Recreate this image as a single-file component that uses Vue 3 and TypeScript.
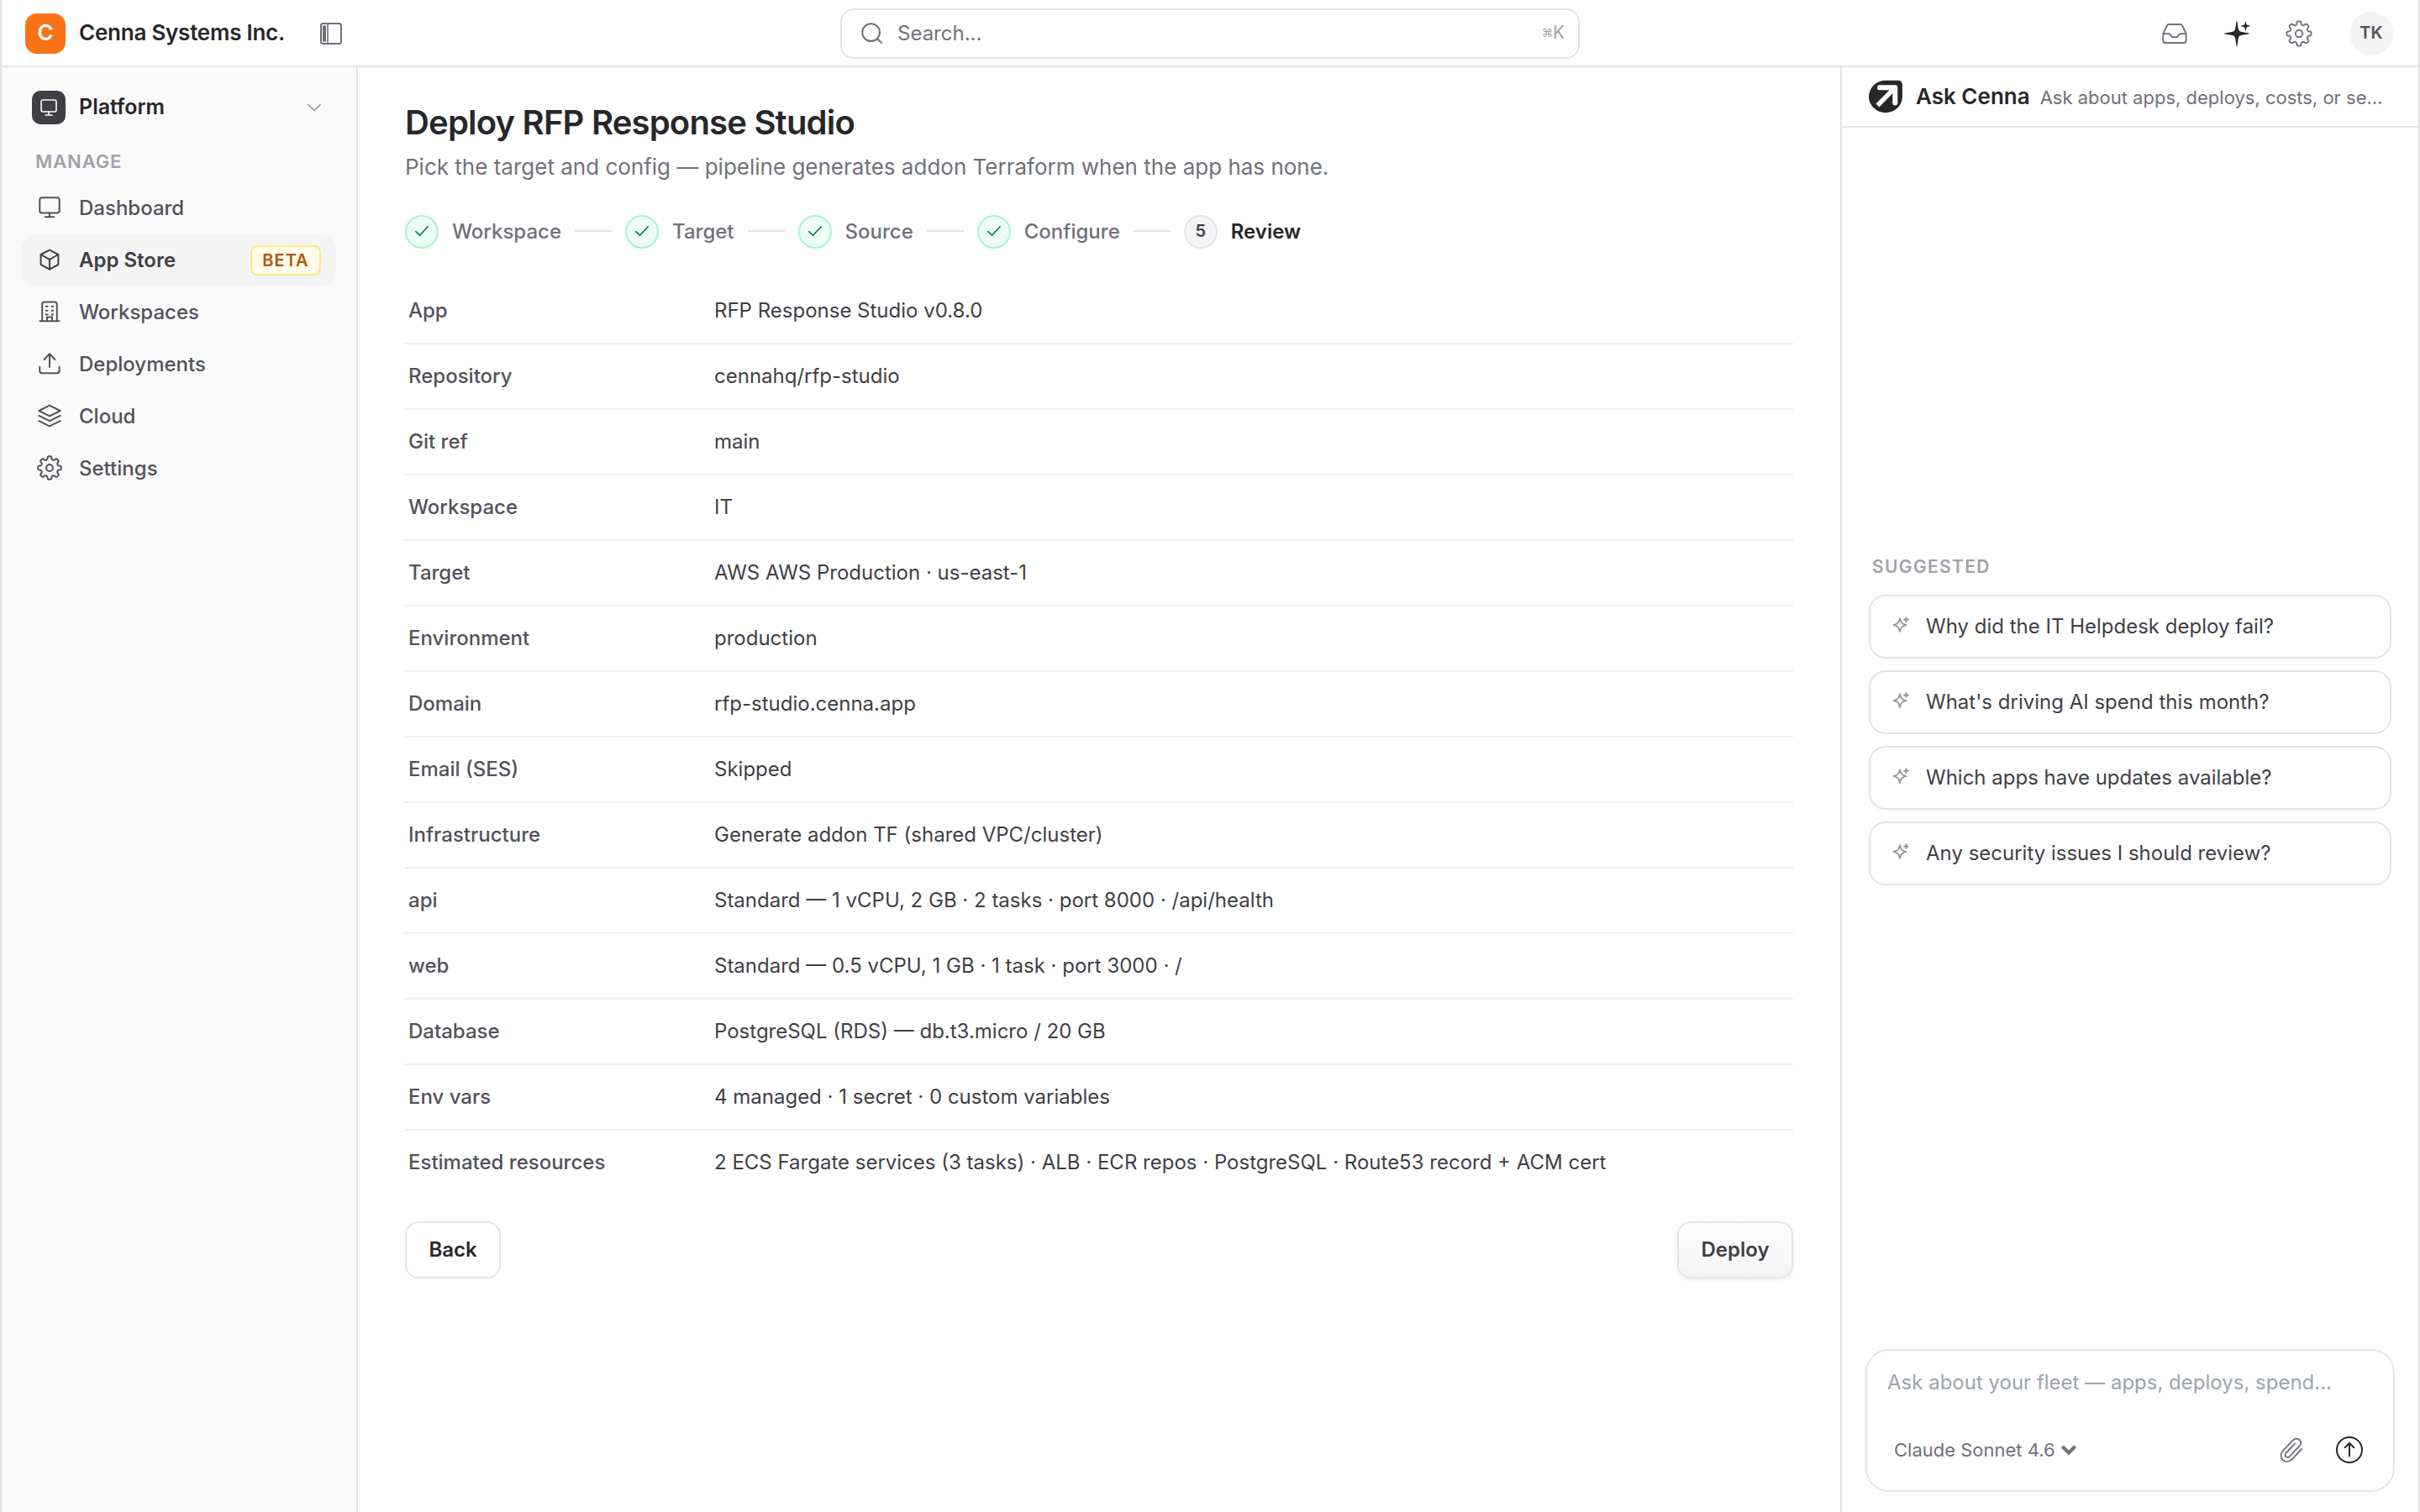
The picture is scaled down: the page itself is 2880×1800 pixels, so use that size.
<script setup lang="ts">
interface NavItem { label: string; icon: string; active?: boolean; badge?: string }
interface Row { label: string; value: string }

const nav: NavItem[] = [
  { label: 'Dashboard', icon: 'monitor' },
  { label: 'App Store', icon: 'cube', active: true, badge: 'BETA' },
  { label: 'Workspaces', icon: 'building' },
  { label: 'Deployments', icon: 'upload' },
  { label: 'Cloud', icon: 'layers' },
  { label: 'Settings', icon: 'gear' },
]

const doneSteps: string[] = ['Workspace', 'Target', 'Source', 'Configure']

const rows: Row[] = [
  { label: 'App', value: 'RFP Response Studio v0.8.0' },
  { label: 'Repository', value: 'cennahq/rfp-studio' },
  { label: 'Git ref', value: 'main' },
  { label: 'Workspace', value: 'IT' },
  { label: 'Target', value: 'AWS AWS Production · us-east-1' },
  { label: 'Environment', value: 'production' },
  { label: 'Domain', value: 'rfp-studio.cenna.app' },
  { label: 'Email (SES)', value: 'Skipped' },
  { label: 'Infrastructure', value: 'Generate addon TF (shared VPC/cluster)' },
  { label: 'api', value: 'Standard — 1 vCPU, 2 GB · 2 tasks · port 8000 · /api/health' },
  { label: 'web', value: 'Standard — 0.5 vCPU, 1 GB · 1 task · port 3000 · /' },
  { label: 'Database', value: 'PostgreSQL (RDS) — db.t3.micro / 20 GB' },
  { label: 'Env vars', value: '4 managed · 1 secret · 0 custom variables' },
  { label: 'Estimated resources', value: '2 ECS Fargate services (3 tasks) · ALB · ECR repos · PostgreSQL · Route53 record + ACM cert' },
]

const suggestions: string[] = [
  'Why did the IT Helpdesk deploy fail?',
  "What's driving AI spend this month?",
  'Which apps have updates available?',
  'Any security issues I should review?',
]

// Eight-lobed cog outline around (cx, cy), alternating between two radii.
function cog(cx: number, cy: number, outer: number, inner: number): string {
  const pts: string[] = []
  const n = 192
  for (let i = 0; i < n; i++) {
    const t = (i / n) * Math.PI * 2
    const c = Math.cos(8 * t)
    const k = 0.5 + 0.5 * Math.tanh(2.2 * (c + 0.1)) / Math.tanh(2.2)
    const r = inner + (outer - inner) * k
    pts.push(`${(cx + r * Math.cos(t)).toFixed(2)} ${(cy + r * Math.sin(t)).toFixed(2)}`)
  }
  return `M${pts.join('L')}Z`
}

const navCog = cog(16, 15, 13.8, 10.2)
const topCog = cog(18, 18, 14.6, 10.8)
</script>

<template>
  <div class="app">
    <header class="top">
      <div class="brand">
        <div class="logo">C</div>
        <span class="brand-name">Cenna Systems Inc.</span>
        <svg class="toggle" width="28" height="28" viewBox="0 0 28 28" fill="none" stroke="currentColor" stroke-width="2">
          <rect x="2" y="2" width="24" height="24" rx="2.5" />
          <path d="M10 2v24" stroke-width="1.6" />
          <rect x="4" y="4.4" width="4" height="19.2" fill="currentColor" stroke="none" />
        </svg>
      </div>
      <div class="search">
        <svg width="28" height="28" viewBox="0 0 28 28" fill="none" stroke="currentColor" stroke-width="2" stroke-linecap="round">
          <circle cx="12.600" cy="12.600" r="10.400" />
          <path d="M20.200 20.200l4.800 4.800" />
        </svg>
        <span class="search-text">Search...</span>
        <span class="kbd"><span class="cmd">⌘</span>K</span>
      </div>
      <div class="actions">
        <svg width="36" height="36" viewBox="0 0 36 36" fill="none" stroke="currentColor" stroke-width="1.9" stroke-linejoin="round">
          <path d="M4.3 18.2L9 8.2Q9.6 7 11 7H25Q26.400 7 27 8.200L31.700 18.200V26.600Q31.700 29 29.300 29H6.700Q4.300 29 4.300 26.600Z" />
          <path d="M4.300 18.200H11.200Q12.600 18.200 13.300 19.600L14 21Q14.700 22.200 16 22.200H20Q21.300 22.200 22 21L22.700 19.600Q23.400 18.200 24.800 18.200H31.700" />
        </svg>
        <svg class="spark" width="36" height="36" viewBox="0 0 36 36" fill="currentColor">
          <path d="M18 3C19 3 19 11.500 20.600 14.600C23 17 33 17 33 18C33 19 23 19 20.600 21.400C19 24.500 19 33 18 33C17 33 17 24.500 15.400 21.400C13 19 3 19 3 18C3 17 13 17 15.400 14.600C17 11.500 17 3 18 3Z" />
          <path d="M28.400 3.400C29 3.400 29 6.400 29.800 7.600C31 8.400 34 8.400 34 9C34 9.600 31 9.600 29.800 10.400C29 11.600 29 14.600 28.400 14.600C27.800 14.600 27.800 11.600 27 10.400C25.800 9.600 22.800 9.600 22.800 9C22.800 8.400 25.800 8.400 27 7.600C27.800 6.400 27.800 3.400 28.400 3.400Z" />
        </svg>
        <svg width="36" height="36" viewBox="0 0 36 36" fill="none" stroke="currentColor" stroke-width="1.9" stroke-linejoin="round">
          <path :d="topCog" />
          <circle cx="18" cy="18" r="4.200" />
        </svg>
        <div class="avatar">TK</div>
      </div>
    </header>

    <div class="body">
      <aside class="side">
        <div class="platform">
          <div class="plat-icon">
            <svg width="24" height="24" viewBox="0 0 24 24" fill="none" stroke="#fff" stroke-width="1.600" stroke-linecap="round">
              <rect x="3" y="3" width="18" height="14" rx="2.200" />
              <path d="M12 17v4M8 21h8" />
            </svg>
          </div>
          <span class="plat-name">Platform</span>
          <svg class="chev" width="20" height="12" viewBox="0 0 20 12" fill="none" stroke="currentColor" stroke-width="1.900" stroke-linecap="round" stroke-linejoin="round">
            <path d="M2.800 2.600L10 9.400L17.200 2.600" />
          </svg>
        </div>
        <div class="section">MANAGE</div>
        <nav class="nav">
          <div v-for="item in nav" :key="item.label" class="nav-item" :class="{ active: item.active }">
            <svg width="32" height="32" viewBox="0 0 32 32" fill="none" stroke="currentColor" stroke-width="2" stroke-linecap="round" stroke-linejoin="round">
              <template v-if="item.icon === 'monitor'">
                <rect x="4.300" y="3.200" width="23.400" height="18.400" rx="2.600" />
                <path d="M16 21.600V26.200M10.700 26.300H21.300" />
              </template>
              <template v-else-if="item.icon === 'cube'">
                <path d="M16 3.700L26.400 9V21L16 26.600L5.600 21V9Z" />
                <path d="M5.600 9L16 14.800L26.400 9M16 14.800V26.600" />
              </template>
              <template v-else-if="item.icon === 'building'">
                <path d="M7.200 26.300V6.400Q7.200 3.600 10 3.600H22Q24.800 3.600 24.800 6.400V26.300M4.400 26.300H27.600M13 26V21.600H19V26" />
                <path d="M11.800 8.700h1.700M18.500 8.700h1.700M11.800 13.700h1.700M18.500 13.700h1.700M11.800 18.600h1.700M18.500 18.600h1.700" />
              </template>
              <template v-else-if="item.icon === 'upload'">
                <path d="M16 19V3.200M9.600 10L16 3.200L22.400 10M4.300 18.700V23.500Q4.300 26.200 7 26.200H25Q27.700 26.200 27.700 23.500V18.700" />
              </template>
              <template v-else-if="item.icon === 'layers'">
                <path d="M16 2.700L28.600 9L16 15.300L3.400 9Z" />
                <path d="M3.400 14.900L16 21.200L28.600 14.900M3.400 21.100L16 27.400L28.600 21.100" />
              </template>
              <template v-else>
                <path :d="navCog" />
                <circle cx="16" cy="15" r="3.900" />
              </template>
            </svg>
            <span class="nav-label">{{ item.label }}</span>
            <span v-if="item.badge" class="badge">{{ item.badge }}</span>
          </div>
        </nav>
      </aside>

      <main class="main">
        <h1>Deploy RFP Response Studio</h1>
        <p class="sub">Pick the target and config — pipeline generates addon Terraform when the app has none.</p>
        <div class="steps">
          <template v-for="s in doneSteps" :key="s">
            <div class="dot done">
              <svg width="18" height="14" viewBox="0 0 18 14" fill="none" stroke="currentColor" stroke-width="1.600" stroke-linecap="round" stroke-linejoin="round">
                <path d="M1.800 7.600L6.600 12.200L16.200 1.800" />
              </svg>
            </div>
            <span class="step-label">{{ s }}</span>
            <span class="line"></span>
          </template>
          <div class="dot">5</div>
          <span class="step-label current">Review</span>
        </div>
        <div class="table">
          <div v-for="r in rows" :key="r.label" class="row">
            <span class="k">{{ r.label }}</span>
            <span class="v">{{ r.value }}</span>
          </div>
        </div>
        <div class="buttons">
          <button class="btn">Back</button>
          <button class="btn primary">Deploy</button>
        </div>
      </main>

      <aside class="ask">
        <div class="ask-head">
          <svg width="40" height="40" viewBox="0 0 40 40">
            <path d="M20 0.800H34.500Q40 0.800 40 6.300V20A20 19.200 0 0 1 0 20A20 19.200 0 0 1 20 0.800Z" fill="#27272a" />
            <path d="M13 9.300H31.300V27.400" fill="none" stroke="#fff" stroke-width="6" stroke-linecap="round" stroke-linejoin="round" />
            <path d="M30 10.500L10.500 30.500" fill="none" stroke="#fff" stroke-width="5.400" />
          </svg>
          <span class="ask-title">Ask Cenna</span>
          <span class="ask-sub">Ask about apps, deploys, costs, or se…</span>
        </div>
        <div class="ask-body">
          <div class="sug-title">SUGGESTED</div>
          <div v-for="s in suggestions" :key="s" class="sug">
            <svg width="24" height="24" viewBox="0 0 24 24" fill="none" stroke="currentColor" stroke-width="1.700" stroke-linejoin="round">
              <path d="M11 3.200C12 8 13.400 10 18.600 11C13.400 12 12 14 11 18.800C10 14 8.600 12 3.400 11C8.600 10 10 8 11 3.200Z" />
              <path d="M18.500 1.400V7.800M15.300 4.600H21.700" stroke-width="1.900" />
            </svg>
            <span>{{ s }}</span>
          </div>
        </div>
        <div class="composer">
          <div class="placeholder">Ask about your fleet — apps, deploys, spend...</div>
          <div class="tools">
            <span class="model">Claude Sonnet 4.6</span>
            <svg class="mchev" width="20" height="14" viewBox="0 0 20 14" fill="none" stroke="currentColor" stroke-width="4.200">
              <path d="M2.400 3L10 10.500L17.600 3" />
            </svg>
            <svg class="clip" width="34" height="34" viewBox="0 0 34 34" fill="none" stroke="currentColor" stroke-width="1.900" stroke-linecap="round" stroke-linejoin="round">
              <path d="M30.300 16L19 27.800C15.500 31.300 11 32 7.800 29C4.500 26 5 21 8.200 17.600L19.500 5.800C22 3.200 25.500 3 27.600 5.200C29.700 7.400 29.400 10.600 27 13.200L16 24.700C14.500 26.200 12.700 26.300 11.500 25.200C10.200 24 10.300 22 11.700 20.500L22 9.800" />
            </svg>
            <svg class="send" width="36" height="36" viewBox="0 0 36 36" fill="none" stroke="currentColor" stroke-width="2" stroke-linecap="round" stroke-linejoin="round">
              <circle cx="18" cy="18" r="15" />
              <path d="M18 25.500V10M12.700 15.200L18 10L23.300 15.200" />
            </svg>
          </div>
        </div>
      </aside>
    </div>
  </div>
</template>

<style>
body { margin: 0; background: #fff; }
</style>

<style scoped>
.app {
  box-sizing: border-box;
  width: 2880px;
  height: 1800px;
  overflow: hidden;
  border-left: 2px solid #e4e4e5;
  border-right: 2px solid #e4e4e5;
  background: #fff;
  color: #27272a;
  font-family: Inter, "Liberation Sans", sans-serif;
  font-size: 24px;
  display: flex;
  flex-direction: column;
}
.app *, .app *::before { box-sizing: border-box; }
svg { display: block; flex: none; }

.top {
  height: 80px;
  border-bottom: 2px solid #e4e4e5;
  display: grid;
  grid-template-columns: 998px 880px 998px;
  align-items: center;
  flex: none;
  padding-top: 2px;
}
.brand { display: flex; align-items: center; padding-left: 28px; }
.logo {
  width: 48px; height: 48px; border-radius: 14px;
  background: #f97316; color: #fff;
  font-weight: 600; font-size: 26px; line-height: 46px; text-align: center;
}
.brand-name { margin-left: 16px; font-size: 26px; letter-spacing: -0.24px; font-weight: 600; line-height: 36px; padding-bottom: 2px; white-space: nowrap; }
.toggle { margin-left: 41px; color: #71717a; }
.search {
  height: 60px;
  border: 2px solid #e4e4e5;
  border-radius: 16px;
  display: flex;
  align-items: center;
  padding: 0 16px 0 22px;
  color: #71717a;
}
.search-text { margin-left: 16px; flex: 1; padding-bottom: 1px; }
.kbd { display: flex; align-items: center; color: #a1a1aa; font-size: 21px; padding-bottom: 3px; }
.cmd { font-size: 13px; }
.actions { display: flex; align-items: center; justify-content: flex-end; padding-right: 30px; gap: 38px; color: #71717a; }
.spark { color: #27272a; }
.avatar {
  width: 52px; height: 52px; border-radius: 50%;
  background: #f4f4f5; color: #52525b;
  font-size: 20px; font-weight: 600; line-height: 50px; text-align: center;
  margin-left: 4px;
}

.body { flex: 1; display: flex; min-height: 0; }
.side { width: 424px; background: #fafafa; border-right: 2px solid #e4e4e5; padding: 28px 24px 0; flex: none; }
.platform { display: flex; align-items: center; height: 40px; padding: 0 16px 0 12px; }
.plat-icon {
  width: 40px; height: 40px; border-radius: 10px; background: #3f3f46;
  display: flex; align-items: center; justify-content: center;
}
.plat-name { margin-left: 16px; font-size: 25px; font-weight: 600; flex: 1; line-height: 36px; padding-bottom: 2px; }
.chev { color: #a1a1aa; }
.section {
  margin-top: 30px; padding-left: 16px;
  font-size: 22px; font-weight: 600; line-height: 28px; letter-spacing: 0.88px; color: #a1a1aa;
}
.nav { margin-top: 12px; display: flex; flex-direction: column; gap: 2px; }
.nav-item {
  height: 60px; border-radius: 16px; display: flex; align-items: center;
  padding: 0 18px 0 17px; color: #52525b; font-weight: 500;
}
.nav-item.active { background: #f4f4f5; color: #3f3f46; font-weight: 600; }
.nav-label { margin-left: 19px; flex: 1; line-height: 38px; }
.badge {
  width: 84px; height: 36px; border: 2px solid #fde68a; border-radius: 8px;
  background: #fffbeb; color: #b45309;
  font-size: 20px; font-weight: 600; letter-spacing: 1px; line-height: 33px; text-align: center;
}

.main { flex: 1; padding: 40px 56px 0; min-width: 0; }
h1 { margin: 0; font-size: 40px; line-height: 52px; font-weight: 600; letter-spacing: -0.8px; }
.sub { margin: 8px 0 0; font-size: 26px; line-height: 38px; color: #71717a; }
.steps { margin-top: 38px; height: 40px; display: flex; align-items: center; gap: 16px; }
.dot {
  width: 40px; height: 40px; border-radius: 50%; border: 2px solid #e4e4e5; background: #f4f4f5;
  color: #3f3f46; font-size: 20px; font-weight: 600; padding-bottom: 2px;
  display: flex; align-items: center; justify-content: center; line-height: 34px; flex: none;
}
.dot.done { border-color: #a7f3d0; background: #ecfdf5; color: #047857; }
.step-label { font-weight: 500; color: #71717a; line-height: 38px; }
.step-label.current { font-weight: 600; color: #27272a; }
.line { width: 44px; height: 2px; background: #e4e4e5; margin-bottom: 2px; }
.table { margin-top: 36px; }
.row { display: flex; align-items: center; height: 78px; border-bottom: 2px solid #f0f0f1; padding: 0 0 2px 4px; }
.row:last-child { border-bottom-color: transparent; }
.k { width: 364px; font-weight: 500; color: #52525b; flex: none; }
.v { color: #3f3f46; white-space: nowrap; }
.buttons { margin-top: 30px; display: flex; justify-content: space-between; }
.btn {
  height: 68px; width: 114px; border: 2px solid #e4e4e5; border-radius: 16px; background: #fff;
  font: 600 24px Inter, "Liberation Sans", sans-serif; color: #27272a; padding: 0 0 2px;
}
.primary {
  width: 138px; color: #3f3f46; background: linear-gradient(#fff, #f4f4f5);
  box-shadow: 0 2px 4px rgba(0, 0, 0, 0.08);
}

.ask { width: 688px; border-left: 2px solid #e4e4e5; display: flex; flex-direction: column; flex: none; }
.ask-head { height: 72px; border-bottom: 2px solid #e4e4e5; display: flex; align-items: center; padding: 0 42px 0 32px; flex: none; }
.ask-title { margin-left: 16px; font-weight: 600; font-size: 26px; white-space: nowrap; padding-bottom: 1px; }
.ask-sub { margin-left: 12px; font-size: 22px; color: #71717a; white-space: nowrap; padding-top: 2px; }
.ask-body { flex: 1; padding: 0 32px; display: flex; flex-direction: column; gap: 14px; padding-top: 508px; }
.sug-title { font-size: 21px; font-weight: 600; letter-spacing: 1.350px; line-height: 30px; color: #a1a1aa; padding-left: 4px; margin-bottom: 4px; }
.sug {
  height: 76px; border: 2px solid #e4e4e5; border-radius: 20px; display: flex; align-items: center;
  padding: 0 24px; color: #3f3f46; font-size: 24px; flex: none;
}
.sug svg { color: #8e8e96; margin-bottom: 2px; }
.sug span { margin-left: 18px; line-height: 36px; }
.composer {
  margin: 0 28px 24px; height: 170px; border: 2px solid #e4e4e5; border-radius: 28px; flex: none;
  display: flex; flex-direction: column; padding: 18px 30px 0 24px;
}
.placeholder { font-size: 24px; line-height: 40px; color: #9ca3af; white-space: nowrap; }
.tools { margin-top: 40px; display: flex; align-items: center; height: 40px; padding-left: 8px; color: #71717a; }
.model { font-size: 22px; white-space: nowrap; }
.mchev { margin-left: 6px; }
.clip { margin-left: auto; }
.send { margin-left: 35px; color: #27272a; margin-right: 4px; }
</style>
